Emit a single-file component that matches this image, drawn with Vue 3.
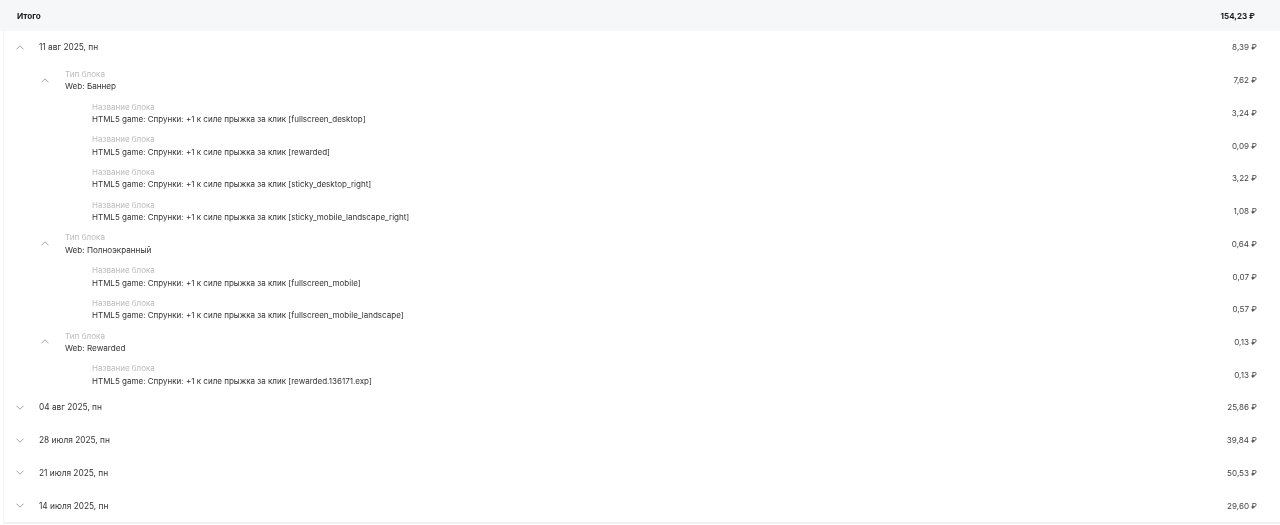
<script setup>
const T = 'HTML5 game: Спрунки: +1 к силе прыжка за клик '
const rows = [
  { k: 'date', open: true, v: '11 авг 2025, пн', a: '8,39 ₽' },
  { k: 'type', v: 'Web: Баннер', a: '7,62 ₽' },
  { k: 'name', v: T + '[fullscreen_desktop]', a: '3,24 ₽' },
  { k: 'name', v: T + '[rewarded]', a: '0,09 ₽' },
  { k: 'name', v: T + '[sticky_desktop_right]', a: '3,22 ₽' },
  { k: 'name', v: T + '[sticky_mobile_landscape_right]', a: '1,08 ₽' },
  { k: 'type', v: 'Web: Полноэкранный', a: '0,64 ₽' },
  { k: 'name', v: T + '[fullscreen_mobile]', a: '0,07 ₽' },
  { k: 'name', v: T + '[fullscreen_mobile_landscape]', a: '0,57 ₽' },
  { k: 'type', v: 'Web: Rewarded', a: '0,13 ₽' },
  { k: 'name', v: T + '[rewarded.136171.exp]', a: '0,13 ₽' },
  { k: 'date', open: false, v: '04 авг 2025, пн', a: '25,86 ₽' },
  { k: 'date', open: false, v: '28 июля 2025, пн', a: '39,84 ₽' },
  { k: 'date', open: false, v: '21 июля 2025, пн', a: '50,53 ₽' },
  { k: 'date', open: false, v: '14 июля 2025, пн', a: '29,60 ₽' },
]
</script>

<template>
  <div class="report">
    <div class="total">
      <span>Итого</span>
      <span class="amount">154,23 ₽</span>
    </div>
    <div class="body">
      <div v-for="(r, i) in rows" :key="i" class="row" :class="r.k">
        <svg v-if="r.k !== 'name'" class="chev" width="8" height="5" viewBox="0 0 8 5">
          <path :d="r.k === 'type' || r.open ? 'M.5 4.3 4 .8l3.5 3.5' : 'M.5.7 4 4.2 7.5.7'" />
        </svg>
        <div class="text">
          <div v-if="r.k === 'type'" class="label">Тип блока</div>
          <div v-if="r.k === 'name'" class="label">Название блока</div>
          <div class="value">{{ r.v }}</div>
        </div>
        <span class="amount">{{ r.a }}</span>
      </div>
    </div>
  </div>
</template>

<style>
html, body { background: #fff; }
</style>

<style scoped>
.report {
  width: 1280px;
  height: 525px;
  font-family: Inter, "Noto Sans", sans-serif;
  font-size: 8.2px;
  color: #333;
  background: #fff;
  overflow: hidden;
  filter: blur(0.25px);
}
.total {
  height: 31px;
  display: flex;
  align-items: center;
  justify-content: space-between;
  padding: 0 25px 0 17px;
  background: #f6f7f9;
  font-weight: 700;
  color: #1a1a1a;
}
.body {
  height: 491px;
  margin-left: 3px;
  border-left: 1px solid #f4f5f7;
  border-bottom: 2px solid #f1f2f6;
  display: flex;
  flex-direction: column;
}
.row {
  flex: 1;
  display: flex;
  align-items: center;
  padding-right: 23px;
  position: relative;
}
.date { padding-left: 35px; font-size: 8.3px; }
.type { padding-left: 61px; font-size: 8.15px; }
.name { padding-left: 88px; font-size: 8.03px; }
.chev {
  position: absolute;
  top: calc(50% - 2.5px);
  fill: none;
  stroke: #8a8a8a;
  stroke-width: 0.8;
}
.date .chev { left: 12px; }
.type .chev { left: 37px; }
.text { flex: 1; line-height: 12.3px; }
.label { color: #bcbcbc; }
.amount { color: #444; font-size: 8.1px; }
.total .amount { color: #1a1a1a; font-size: 8px; }
</style>
